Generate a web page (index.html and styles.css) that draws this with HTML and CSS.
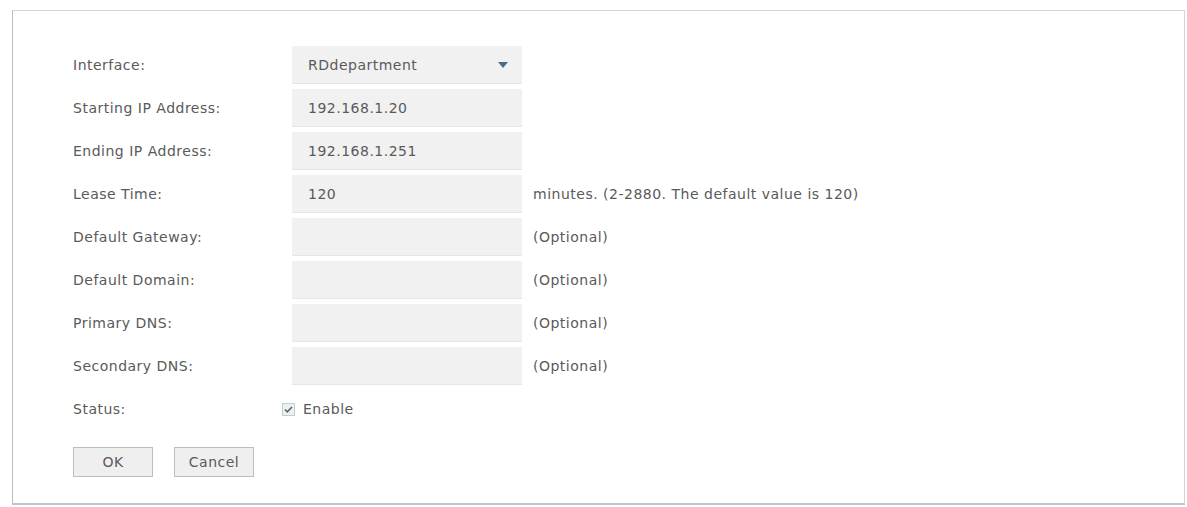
FILE: index.html
```html
<!DOCTYPE html>
<html lang="en">
<head>
    <meta charset="UTF-8">
    <title>DHCP Server</title>
    <link rel="stylesheet" href="styles.css">
</head>
<body>
    <div class="panel">
        <div class="row">
            <label>Interface:</label>
            <div class="field select">
                <span>RDdepartment</span>
                <svg class="arrow" width="10" height="6" viewBox="0 0 10 6"><path d="M0 0H10L5 6Z" fill="#4d6a84"/></svg>
            </div>
        </div>
        <div class="row">
            <label>Starting IP Address:</label>
            <div class="field">192.168.1.20</div>
        </div>
        <div class="row">
            <label>Ending IP Address:</label>
            <div class="field">192.168.1.251</div>
        </div>
        <div class="row">
            <label>Lease Time:</label>
            <div class="field">120</div>
            <span class="hint">minutes. (2-2880. The default value is 120)</span>
        </div>
        <div class="row">
            <label>Default Gateway:</label>
            <div class="field"></div>
            <span class="hint">(Optional)</span>
        </div>
        <div class="row">
            <label>Default Domain:</label>
            <div class="field"></div>
            <span class="hint">(Optional)</span>
        </div>
        <div class="row">
            <label>Primary DNS:</label>
            <div class="field"></div>
            <span class="hint">(Optional)</span>
        </div>
        <div class="row">
            <label>Secondary DNS:</label>
            <div class="field"></div>
            <span class="hint">(Optional)</span>
        </div>
        <div class="row status">
            <label>Status:</label>
            <span class="check">
                <svg width="13" height="13" viewBox="0 0 13 13"><rect x="0.5" y="0.5" width="12" height="12" fill="#eef0f0" stroke="#c9cccc"/><path d="M3 6.5L5.3 8.8L10 4" fill="none" stroke="#4b6b6b" stroke-width="1.6"/></svg>
            </span>
            <span class="check-label">Enable</span>
        </div>
        <div class="buttons">
            <button>OK</button>
            <button>Cancel</button>
        </div>
    </div>
</body>
</html>
```

FILE: styles.css
```css
* {
    box-sizing: border-box;
}

body {
    margin: 10px 2px 0 12px;
    background: white;
    font-family: "DejaVu Sans", Verdana, sans-serif;
    font-size: 14px;
    letter-spacing: 0.5px;
    color: #5a5a5a;
}

.panel {
    height: 495px;
    border: 1px solid #d2d6d6;
    border-left-color: #b9bdbd;
    border-bottom: 2px solid #bfc4c4;
    padding: 35px 0 0 60px;
}

.row {
    display: flex;
    align-items: center;
    height: 38px;
    margin-bottom: 5px;
}

.row label {
    width: 219px;
    flex-shrink: 0;
}

.field {
    width: 230px;
    height: 38px;
    background: #f1f1f1;
    border-bottom: 1px solid #e6e6e6;
    padding: 0 16px;
    display: flex;
    align-items: center;
}

.select {
    justify-content: space-between;
    padding-right: 14px;
}

.hint {
    margin-left: 11px;
}

.status label {
    width: 209px;
}

.check {
    display: flex;
    margin-right: 8px;
}

.buttons {
    display: flex;
    gap: 21px;
    margin-top: 19px;
}

.buttons button {
    width: 80px;
    height: 30px;
    background: #efefef;
    border: 1px solid #bdbdbd;
    font-family: "DejaVu Sans", Verdana, sans-serif;
    font-size: 14px;
    letter-spacing: 0.5px;
    color: #5a5a5a;
}
```
